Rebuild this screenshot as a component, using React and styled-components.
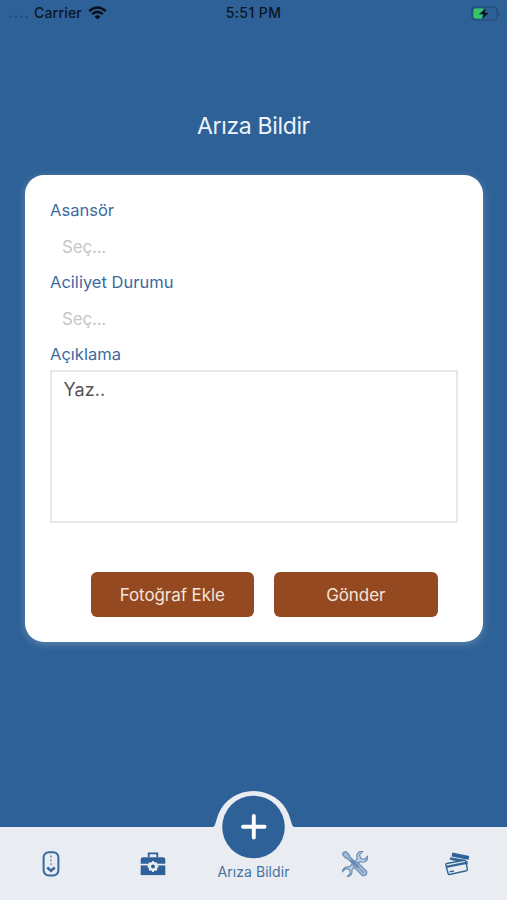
import React from "react";
import styled, { createGlobalStyle } from "styled-components";

const BLUE = "#2e6197";
const PALE = "#e9edf2";

const GlobalStyle = createGlobalStyle`
  *, *::before, *::after { box-sizing: border-box; }
  body {
    margin: 0;
    background: ${BLUE};
    font-family: Inter, Roboto, sans-serif;
  }
`;

const Screen = styled.div`
  width: 507px;
  height: 900px;
  display: flex;
  flex-direction: column;
  background: ${BLUE};
  overflow: hidden;
`;

const StatusBar = styled.header`
  height: 26px;
  display: grid;
  grid-template-columns: 1fr auto 1fr;
  align-items: center;
  padding: 0 6px 0 8px;
  font-size: 14px;
  font-weight: 500;
  line-height: 26px;
  color: #0b1622;
`;

const Carrier = styled.div`
  display: flex;
  align-items: center;
`;

const CarrierName = styled.span`
  margin: 0 6px 0 5px;
  letter-spacing: 0.2px;
`;

const Clock = styled.span`
  margin-right: 2px;
  letter-spacing: 0.4px;
`;

const Power = styled.div`
  display: flex;
  justify-content: flex-end;
`;

const Title = styled.h1`
  margin: 85px 0 0;
  height: 30px;
  line-height: 30px;
  text-align: center;
  font-size: 23px;
  font-weight: 400;
  letter-spacing: -0.35px;
  color: #edf4fc;
`;

const Card = styled.section`
  width: 458px;
  height: 467px;
  margin: 34px 0 0 25px;
  padding: 23px 25px 0 25px;
  border-radius: 19px;
  background: #fff;
  box-shadow: 0 2px 9px rgba(205, 215, 228, 0.32);
`;

const Label = styled.div`
  height: 24px;
  line-height: 24px;
  font-size: 16.5px;
  letter-spacing: 0.02px;
  color: #3c6a9f;
`;

const Picker = styled.div`
  height: 48px;
  padding-left: 12px;
  line-height: 50px;
  font-size: 17px;
  letter-spacing: -0.2px;
  color: #c6c6c9;
`;

const TextBox = styled.div`
  height: 153px;
  margin-top: 4px;
  padding: 6px 11.5px;
  border: 2px solid #e6e7e9;
  font-size: 18px;
  line-height: 24px;
  letter-spacing: 0.1px;
  color: #555;
`;

const Actions = styled.div`
  display: flex;
  gap: 20px;
  margin: 49px 0 0 40.5px;
`;

const Button = styled.button`
  width: 163.5px;
  flex: none;
  height: 45px;
  padding: 0;
  border: 0;
  border-radius: 6px;
  background: #944920;
  color: #f6e4d9;
  font: inherit;
  font-size: 17px;
  letter-spacing: -0.08px;
`;

const TabBar = styled.nav`
  height: 73px;
  margin-top: auto;
  display: grid;
  grid-template-columns: repeat(5, 1fr);
  background: ${PALE};
`;

const Tab = styled.div`
  display: flex;
  align-items: center;
  justify-content: center;
  padding-left: 1px;
`;

const CenterTab = styled.div`
  position: relative;
  display: flex;
  justify-content: center;
  align-items: flex-end;
  padding-bottom: 18px;
  font-size: 14px;
  line-height: 20px;
  white-space: nowrap;
  letter-spacing: 0.06px;
  color: #4673a4;
`;

const RaisedButton = styled.svg`
  position: absolute;
  left: 50%;
  bottom: 39px;
  margin-left: -44px;
`;

function WifiIcon() {
  return (
    <svg width="19" height="14" viewBox="0 0 19 14" fill="none" stroke="#071018" strokeWidth="2.5">
      <path d="M1.2 5.1Q9.5-2.2 17.8 5.1" />
      <path d="M4.1 8.1Q9.5 3.6 14.9 8.1" />
      <path d="M9.5 13.4 6.5 10.4Q9.5 8.2 12.5 10.4Z" fill="#071018" stroke="none" />
    </svg>
  );
}

function SignalDots() {
  return (
    <svg width="21" height="14" viewBox="0 0 21 14" fill="#24507e">
      {[2.2, 7.7, 13.2, 18.7].map((x) => (
        <circle key={x} cx={x} cy="10.8" r="1.4" />
      ))}
    </svg>
  );
}

function BatteryIcon() {
  return (
    <svg width="30" height="15" viewBox="0 0 30 15">
      <rect x="1" y="1" width="25" height="13" rx="3.5" fill="none" stroke="#204b76" strokeWidth="1.2" />
      <path d="M27.6 5.2q2.3 2.3 0 4.6z" fill="#204b76" />
      <rect x="2.5" y="2.6" width="10.5" height="9.8" rx="2" fill="#35c864" />
      <path d="M15.2 1.8 8 8.2h4.2l-1.2 5 7-6.5h-4.2z" fill="#071018" stroke={BLUE} strokeWidth=".5" />
    </svg>
  );
}

function ElevatorIcon() {
  return (
    <svg width="18" height="26" viewBox="0 0 18 26" fill="none" stroke="#39699d" strokeWidth="2">
      <rect x="1.6" y="1.3" width="14.8" height="23.2" rx="5.2" />
      <path d="M9 4.6v1.8M9 8.4v1.8M9 12.2v1.8" strokeWidth="1.6" stroke="#6b90b7" />
      <path d="m5.2 16.4 3.8 3.3 3.8-3.3" strokeWidth="2.6" />
    </svg>
  );
}

function ToolboxIcon() {
  const teeth = [0, 45, 90, 135, 180, 225, 270, 315];
  return (
    <svg width="26" height="24" viewBox="0 0 26 24">
      <path d="M8.7 5V1.4h8.6V5" fill="none" stroke={BLUE} strokeWidth="1.8" />
      <path d="M3 5.2h20q2.3 0 2.3 2.3v4.2H.7V7.5Q.7 5.2 3 5.2Z" fill={BLUE} />
      <path d="M.7 13.4h24.6v9.7H.7Z" fill={BLUE} />
      <g fill={PALE} transform="translate(13 14.5)">
        <circle r="4.5" />
        {teeth.map((a) => (
          <rect key={a} x="-1" y="-5.4" width="2" height="2.5" transform={`rotate(${a})`} />
        ))}
      </g>
      <circle cx="13" cy="14.5" r="2" fill={BLUE} />
    </svg>
  );
}

function ToolsIcon() {
  const wrench =
    "M-2 6.6V-5.5A5 5 0 0 1-3.4-14.5V-9.8L0-7.9L3.4-9.8V-14.5A5 5 0 0 1 2-5.5V6.6A5 5 0 0 1 3.4 14.5V9.8L0 7.9L-3.4 9.8V14.5A5 5 0 0 1-2 6.6Z";
  return (
    <svg width="26" height="26" viewBox="0 0 26 26" stroke="#6a8fb8" strokeWidth="1.2" strokeLinejoin="round">
      <g transform="translate(13 13) rotate(45)">
        <path d={wrench} fill="#c3d1e0" />
      </g>
      <g transform="translate(13 13) rotate(-45)">
        <path d="M-2.4-15.2q2.4-2 4.8 0v4.5L1.4-8.8V0h1.6v13.5q-3 3.8-6 0V0h1.6v-8.8l-1-1.9Z" fill="#a5bad1" />
        <path d="M0 4.5v8" stroke="#7899bd" strokeWidth="1.1" />
      </g>
      <path d="m9 9 7.5 7.5" stroke="#6389b4" strokeWidth="2.6" />
    </svg>
  );
}

function CardsIcon() {
  return (
    <svg width="26" height="26" viewBox="0 0 26 26" fill="none" stroke="#336598">
      <path d="m8.3 1.6 17 3.3-.8 3.9L7.5 5.5Z" fill={BLUE} stroke="none" />
      <path d="M6.5 8 22.8 11l.2 2.6" strokeWidth="1.6" />
      <path d="m6 7.4 15 2.6" strokeWidth="2.5" />
      <path d="m2.8 12.5 17.5-3.3q1.2-.1 1.4 1l1.6 8q.1 1.2-1 1.5L5.6 23.5q-1.2.1-1.5-1l-2.3-8.6q-.2-1.1 1-1.4Z" fill={PALE} strokeWidth="1.4" />
      <path d="m2.3 15.8 19.8-4" strokeWidth="2.3" />
      <path d="m5.6 20.8 4.2-.8" strokeWidth="1.4" />
    </svg>
  );
}

function PlusBadge() {
  return (
    <RaisedButton width="88" height="72" viewBox="0 0 88 72">
      <path d="M4 38.5V38Q5.5 37.5 6.2 35L9.2 25.5A38.2 38.2 0 0 1 79.8 25.5L82.8 35Q83.5 37.5 85 38v.5Z" fill={PALE} />
      <circle cx="44.5" cy="38" r="31.3" fill={BLUE} />
      <path d="M34 37.7h21.6M44.8 26.9v21.6" stroke="#fff" strokeWidth="3.9" strokeLinecap="round" />
    </RaisedButton>
  );
}

export default function App() {
  return (
    <>
      <GlobalStyle />
      <Screen>
        <StatusBar>
          <Carrier>
            <SignalDots />
            <CarrierName>Carrier</CarrierName>
            <WifiIcon />
          </Carrier>
          <Clock>5:51 PM</Clock>
          <Power>
            <BatteryIcon />
          </Power>
        </StatusBar>
        <Title>Arıza Bildir</Title>
        <Card>
          <Label>Asansör</Label>
          <Picker>Seç...</Picker>
          <Label>Aciliyet Durumu</Label>
          <Picker>Seç...</Picker>
          <Label>Açıklama</Label>
          <TextBox>Yaz..</TextBox>
          <Actions>
            <Button>Fotoğraf Ekle</Button>
            <Button>Gönder</Button>
          </Actions>
        </Card>
        <TabBar>
          <Tab>
            <ElevatorIcon />
          </Tab>
          <Tab>
            <ToolboxIcon />
          </Tab>
          <CenterTab>
            <PlusBadge />
            Arıza Bildir
          </CenterTab>
          <Tab>
            <ToolsIcon />
          </Tab>
          <Tab>
            <CardsIcon />
          </Tab>
        </TabBar>
      </Screen>
    </>
  );
}
